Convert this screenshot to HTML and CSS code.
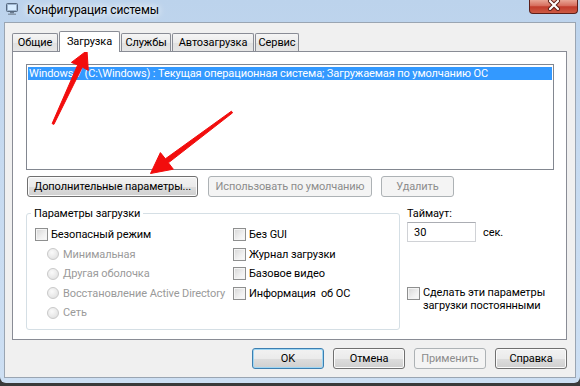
FILE: index.html
```html
<!DOCTYPE html>
<html lang="ru">
<head>
  <meta charset="UTF-8" />
  <title>Конфигурация системы</title>
  <link rel="stylesheet" href="styles.css">
</head>
<body>

  <div class="window">
    <div class="titlebar">
      <svg class="app-icon" width="12" height="12" viewBox="0 0 12 12">
        <rect x="0.5" y="0.5" width="11" height="8" rx="1" fill="#9fb6cf" stroke="#56697f"/>
        <rect x="2" y="2" width="8" height="5" fill="#d7ecff"/>
        <rect x="4" y="9" width="4" height="1.5" fill="#6b7c90"/>
        <rect x="2" y="10.5" width="8" height="1.5" fill="#8797a9"/>
      </svg>
      <span class="title-text">Конфигурация системы</span>
      <div class="close-btn">
        <svg width="14" height="11" viewBox="0 0 14 11">
          <path d="M3 1 L11 9 M11 1 L3 9" stroke="#5a1b14" stroke-width="4" stroke-linecap="round"/>
          <path d="M3 1 L11 9 M11 1 L3 9" stroke="#ffffff" stroke-width="2.2" stroke-linecap="round"/>
        </svg>
      </div>
    </div>

    <div class="client">
      <div class="tabs">
        <div class="tab tab-general">Общие</div>
        <div class="tab tab-boot active">Загрузка</div>
        <div class="tab tab-services">Службы</div>
        <div class="tab tab-startup">Автозагрузка</div>
        <div class="tab tab-tools">Сервис</div>
      </div>

      <div class="panel">
        <div class="listbox">
          <div class="list-item selected">Windows 7 (C:\Windows) : Текущая операционная система; Загружаемая по умолчанию ОС</div>
        </div>

        <div class="button-row">
          <button class="btn btn-advanced">Дополнительные параметры...</button>
          <button class="btn btn-set-default" disabled>Использовать по умолчанию</button>
          <button class="btn btn-delete" disabled>Удалить</button>
        </div>

        <div class="lower">
          <div class="group">
            <div class="group-title">Параметры загрузки</div>
            <div class="options">
              <div class="col col-left">
                <div class="opt"><span class="check"></span>Безопасный режим</div>
                <div class="opt sub disabled"><span class="radio"></span>Минимальная</div>
                <div class="opt sub disabled"><span class="radio"></span>Другая оболочка</div>
                <div class="opt sub disabled"><span class="radio"></span>Восстановление Active Directory</div>
                <div class="opt sub disabled"><span class="radio"></span>Сеть</div>
              </div>
              <div class="col">
                <div class="opt"><span class="check"></span>Без GUI</div>
                <div class="opt"><span class="check"></span>Журнал загрузки</div>
                <div class="opt"><span class="check"></span>Базовое видео</div>
                <div class="opt"><span class="check"></span>Информация&nbsp; об ОС</div>
              </div>
            </div>
          </div>

          <div class="timeout">
            <div class="timeout-label">Таймаут:</div>
            <div class="timeout-row">
              <input class="timeout-input" type="text" value="30">
              <span>сек.</span>
            </div>
            <div class="opt permanent">
              <span class="check"></span>
              <span>Сделать эти параметры<br>загрузки постоянными</span>
            </div>
          </div>
        </div>
      </div>

      <div class="footer">
        <button class="btn btn-footer btn-ok">OK</button>
        <button class="btn btn-footer">Отмена</button>
        <button class="btn btn-footer" disabled>Применить</button>
        <button class="btn btn-footer">Справка</button>
      </div>
    </div>
  </div>

  <!-- red arrows drawn over the dialog -->
  <svg class="arrows" width="580" height="386" viewBox="0 0 580 386">
    <polygon points="53.9,124.4 82.3,67.1 88.3,70.4 87,50.5 71.4,62.4 77.7,64.9 52.1,123.6" />
    <polygon points="232.6,112.8 168.4,162.8 173.3,169.2 150.5,173.5 160.4,152.6 165.4,158.8 231.4,111.2" />
  </svg>

</body>
</html>
```

FILE: styles.css
```css
body {
  margin: 0;
  width: 580px;
  height: 386px;
  overflow: hidden;
  position: relative;
  background: #3a3a3a;
  font-family: "Segoe UI", Roboto, sans-serif;
  font-size: 11px;
  letter-spacing: -0.1px;
  color: #000;
}

.window {
  height: 383px;
  box-sizing: border-box;
  padding-bottom: 5px;
  background: linear-gradient(180deg, #bcd3ec 0%, #c6daf0 40%, #cddff3 100%);
  border-radius: 0 0 6px 6px;
  display: flex;
  flex-direction: column;
}

.titlebar {
  height: 22px;
  display: flex;
  align-items: flex-start;
}

.app-icon {
  margin: 3px 0 0 6px;
}

.title-text {
  margin: 2px 0 0 9px;
  font-size: 12px;
  line-height: 16px;
  text-shadow: 0 0 6px #fff, 0 0 10px #fff;
}

.close-btn {
  margin-left: auto;
  margin-right: 2px;
  width: 49px;
  height: 14px;
  box-sizing: border-box;
  border: 1px solid #5c1f19;
  border-top: none;
  border-radius: 0 0 4px 4px;
  background: linear-gradient(180deg, #e9a595 0%, #d66c5c 45%, #c23b2b 52%, #cc5a44 100%);
  display: flex;
  justify-content: center;
  align-items: flex-start;
}

.client {
  flex: 1;
  margin: 0 4px;
  background: #f0f0f0;
  border: 1px solid #9aa5b2;
  padding: 8px 8px 0 7px;
}

.tabs {
  display: flex;
  gap: 1px;
  height: 21px;
  align-items: flex-start;
  position: relative;
  z-index: 1;
}

.tab {
  margin-top: 2px;
  height: 18px;
  box-sizing: border-box;
  border: 1px solid #898c95;
  border-bottom: none;
  border-radius: 2px 2px 0 0;
  background: linear-gradient(180deg, #f5f5f5 0%, #ebebeb 50%, #e0e0e0 51%, #e6e6e6 100%);
  text-align: center;
  line-height: 17px;
  white-space: nowrap;
}

.tab.active {
  margin-top: 0;
  height: 21px;
  line-height: 19px;
  background: #fff;
}

.tab-general { width: 46px; }
.tab-boot { width: 61px; }
.tab-services { width: 50px; }
.tab-startup { width: 82px; }
.tab-tools { width: 44px; }

.panel {
  margin-top: -1px;
  width: 555px;
  height: 289px;
  box-sizing: border-box;
  border: 1px solid #898c95;
  background: #fff;
  padding: 12px 0 0 13px;
}

.listbox {
  width: 528px;
  height: 106px;
  box-sizing: border-box;
  border: 1px solid #828790;
  padding: 2px 1px;
}

.list-item {
  line-height: 13px;
  padding-left: 1px;
  white-space: nowrap;
}

.list-item.selected {
  background: #3399ff;
  color: #fff;
}

.button-row {
  display: flex;
  margin-top: 6px;
}

.btn {
  height: 21px;
  padding: 0;
  box-sizing: border-box;
  font-family: inherit;
  font-size: 11px;
  letter-spacing: inherit;
  color: #000;
  white-space: nowrap;
  border: 1px solid #707070;
  border-radius: 3px;
  background: linear-gradient(180deg, #f2f2f2 0%, #ebebeb 50%, #dddddd 51%, #cfcfcf 100%);
  box-shadow: inset 0 0 0 1px #fbfbfb;
}

.btn:disabled {
  color: #8c8c8c;
  border-color: #adb2b5;
  background: #f4f4f4;
  box-shadow: none;
}

.btn-advanced {
  margin-left: 1px;
  width: 171px;
}

.btn-set-default {
  margin-left: 10px;
  width: 164px;
}

.btn-delete {
  margin-left: 9px;
  width: 73px;
}

.lower {
  display: flex;
  align-items: flex-start;
}

.group {
  margin-top: 16px;
  width: 374px;
  height: 117px;
  box-sizing: border-box;
  border: 1px solid #d5dfe5;
  border-radius: 3px;
}

.group-title {
  display: table;
  margin: -8px 0 0 4px;
  padding: 0 3px;
  background: #fff;
  line-height: 15px;
}

.options {
  display: flex;
  margin-top: 4px;
  padding-left: 8px;
}

.col-left {
  width: 198px;
}

.opt {
  display: flex;
  align-items: center;
  gap: 3px;
  height: 19.5px;
  white-space: nowrap;
}

.opt.sub {
  padding-left: 12px;
  gap: 4px;
}

.disabled {
  color: #9a9a9a;
}

.check {
  flex: none;
  width: 13px;
  height: 13px;
  box-sizing: border-box;
  border: 1px solid #8e8f8f;
  background: linear-gradient(135deg, #d6d6d6 0%, #f0f0f0 60%, #fbfbfb 100%);
  box-shadow: inset 0 0 0 1px #f4f4f4;
}

.radio {
  flex: none;
  width: 12px;
  height: 12px;
  box-sizing: border-box;
  border: 1px solid #c9c9c9;
  border-radius: 50%;
  background: radial-gradient(circle at 40% 35%, #fafafa 0%, #e8e8e8 60%, #dadada 100%);
}

.timeout {
  margin: 9px 0 0 7px;
}

.timeout-label {
  line-height: 15px;
}

.timeout-row {
  display: flex;
  align-items: center;
  gap: 7px;
  margin-top: 1px;
}

.timeout-input {
  width: 69px;
  height: 20px;
  box-sizing: border-box;
  margin: 0;
  border: 1px solid #d0d2d6;
  border-top-color: #abadb3;
  padding: 0 0 0 6px;
  font-family: inherit;
  font-size: 11px;
  color: #000;
  outline: none;
}

.opt.permanent {
  height: auto;
  align-items: flex-start;
  margin-top: 44px;
  line-height: 13px;
}

.permanent .check {
  margin-top: 1px;
}

.footer {
  display: flex;
  justify-content: flex-end;
  gap: 9px;
  margin-top: 8px;
}

.btn-footer {
  width: 72px;
}

.btn-ok {
  border-color: #3c7fb1;
  box-shadow: inset 0 0 0 1px #9fd6f3;
}

.arrows {
  position: absolute;
  top: 0;
  left: 0;
  pointer-events: none;
}

.arrows polygon {
  fill: #f20d0d;
  stroke: #f20d0d;
  stroke-width: 1;
  stroke-linejoin: round;
}
```
